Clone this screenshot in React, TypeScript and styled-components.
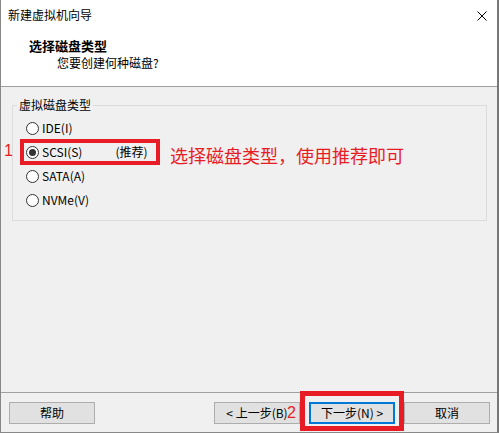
import React from 'react';
import styled, {createGlobalStyle} from "styled-components";

const GlobalStyle = createGlobalStyle`
  html, body {
    margin: 0;
    padding: 0;
    background: #ffffff;
  }

  body {
    font-family: "Noto Sans CJK SC", "Noto Sans", sans-serif;
    font-size: 12px;
    color: #000;
  }
`

const RED = '#e81c24';

const Window = styled.div`
  width: 499px;
  height: 433px;
  box-sizing: border-box;
  display: flex;
  flex-direction: column;
  border-left: 1px solid #888;
  border-right: 2px solid #777;
  border-bottom: 1px solid #888;
  background: #f0f0f0;
  position: relative;
`

const TitleBar = styled.div`
  height: 30px;
  flex: none;
  display: flex;
  align-items: center;
  justify-content: space-between;
  padding: 0 10px 0 7px;
  background: #fff;
  font-size: 12px;
  line-height: 16px;
`

const CloseButton = styled.button`
  border: none;
  background: none;
  padding: 0;
  width: 10px;
  height: 10px;
  display: flex;
  margin-top: 1px;
`

const Header = styled.div`
  height: 57px;
  flex: none;
  box-sizing: border-box;
  background: #fff;
  border-bottom: 1px solid #a0a0a0;
  padding: 8px 0 0 28px;
`

const HeaderTitle = styled.div`
  font-size: 13px;
  font-weight: bold;
  line-height: 16px;
`

const HeaderSub = styled.div`
  font-size: 12px;
  line-height: 16px;
  margin: 1px 0 0 28px;
`

const Main = styled.div`
  flex: 1;
  padding: 10px 10px 0 11px;
`

const GroupBox = styled.fieldset`
  margin: 0;
  padding: 3px 0 8px 13px;
  border: 1px solid #dcdcdc;
  display: flex;
  flex-direction: column;
`

const Legend = styled.legend`
  padding: 0 2px;
  margin-left: -9px;
  font-size: 12px;
  line-height: 16px;
`

const Row = styled.div`
  height: 24px;
  display: flex;
  align-items: center;
  gap: 3px;
  line-height: 16px;
`

const Radio = styled.span<{ $checked?: boolean }>`
  width: 13px;
  height: 13px;
  box-sizing: border-box;
  border: 1px solid #333;
  border-radius: 50%;
  background: #fff;
  display: inline-flex;
  align-items: center;
  justify-content: center;
  flex: none;

  &::after {
    content: '';
    width: 7px;
    height: 7px;
    border-radius: 50%;
    background: ${p => (p.$checked ? '#333' : 'transparent')};
  }
`

const Highlight = styled.div`
  position: relative;
  height: 26px;
  width: 140px;
  box-sizing: border-box;
  margin-left: -6px;
  padding-left: 2px;
  border: 4px solid ${RED};
  display: flex;
  align-items: center;
  gap: 3px;
`

const Recommend = styled.span`
  margin-left: 30px;
`

const Marker = styled.span`
  position: absolute;
  right: calc(100% + 11px);
  top: 0;
  font-family: "Liberation Sans", Arial, sans-serif;
  font-size: 16px;
  line-height: 16px;
  color: ${RED};
`

const Hint = styled.span`
  margin: 5px 0 0 7px;
  font-size: 18px;
  line-height: 20px;
  color: ${RED};
  white-space: nowrap;
`

const Footer = styled.div`
  height: 40px;
  flex: none;
  box-sizing: border-box;
  border-top: 1px solid #a0a0a0;
  display: flex;
  align-items: flex-start;
  padding: 9px 7px 0 8px;
`

const ButtonGroup = styled.div`
  margin-left: auto;
  display: flex;
  gap: 9px;
`

const Button = styled.button<{ $default?: boolean }>`
  width: 86px;
  height: 22px;
  box-sizing: border-box;
  padding: 0;
  font-family: "Noto Sans CJK SC", "Noto Sans", sans-serif;
  font-size: 12px;
  line-height: 16px;
  color: #000;
  background: #e1e1e1;
  border: ${p => (p.$default ? '2px solid #0078d7' : '1px solid #adadad')};
`

const NextWrap = styled.div`
  position: relative;
  display: flex;
`

const NextMark = styled.div`
  position: absolute;
  left: -9px;
  right: -9px;
  top: -11px;
  height: 40px;
  box-sizing: border-box;
  border: 5px solid ${RED};
  pointer-events: none;

  ${Marker} {
    right: calc(100% + 9px);
    top: 9px;
  }
`

const App: React.FC = () => {
    return (
        <>
            <GlobalStyle/>
            <Window>
                <TitleBar>
                    <span>新建虚拟机向导</span>
                    <CloseButton aria-label="关闭">
                        <svg width="10" height="10" viewBox="0 0 10 10">
                            <path d="M0.5 0.5 L9.5 9.5 M9.5 0.5 L0.5 9.5" stroke="#000" strokeWidth="1" fill="none"/>
                        </svg>
                    </CloseButton>
                </TitleBar>
                <Header>
                    <HeaderTitle>选择磁盘类型</HeaderTitle>
                    <HeaderSub>您要创建何种磁盘?</HeaderSub>
                </Header>
                <Main>
                    <GroupBox>
                        <Legend>虚拟磁盘类型</Legend>
                        <Row>
                            <Radio/>
                            <span>IDE(I)</span>
                        </Row>
                        <Row>
                            <Highlight>
                                <Marker>1</Marker>
                                <Radio $checked/>
                                <span>SCSI(S)</span>
                                <Recommend>(推荐)</Recommend>
                            </Highlight>
                            <Hint>选择磁盘类型，使用推荐即可</Hint>
                        </Row>
                        <Row>
                            <Radio/>
                            <span>SATA(A)</span>
                        </Row>
                        <Row>
                            <Radio/>
                            <span>NVMe(V)</span>
                        </Row>
                    </GroupBox>
                </Main>
                <Footer>
                    <Button>帮助</Button>
                    <ButtonGroup>
                        <Button>&lt; 上一步(B)</Button>
                        <NextWrap>
                            <Button $default>下一步(N) &gt;</Button>
                            <NextMark>
                                <Marker>2</Marker>
                            </NextMark>
                        </NextWrap>
                        <Button>取消</Button>
                    </ButtonGroup>
                </Footer>
            </Window>
        </>
    );
};

export default App;
